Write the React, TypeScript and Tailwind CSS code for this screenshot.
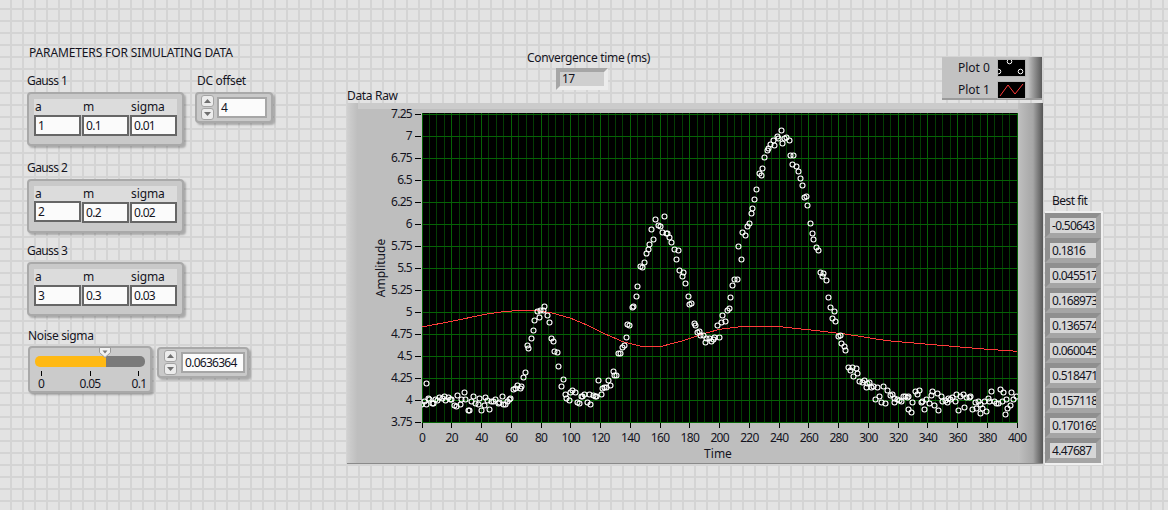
import { useMemo } from 'react'

const font = 'font-["Noto_Sans","Liberation_Sans",sans-serif]'
const num = 'text-[12px] tracking-[-0.72px]'
const label = 'text-[12px] tracking-[-0.33px]'

const xOf = (t: number) => 422 + t * 1.488
const yOf = (v: number) => 422 - (v - 3.75) * 88

// same little generator every run, so the scatter does not move
function seeded(seed: number) {
  let s = seed
  return () => {
    s |= 0
    s = (s + 0x6d2b79f5) | 0
    let r = Math.imul(s ^ (s >>> 15), 1 | s)
    r = (r + Math.imul(r ^ (r >>> 7), 61 | r)) ^ r
    return ((r ^ (r >>> 14)) >>> 0) / 4294967296
  }
}

const gauss = (t: number, a: number, m: number, s: number) => a * Math.exp(-((t - m) ** 2) / (2 * s * s))

const fitLine: [number, number][] = [
  [422, 327], [453, 321], [487, 314], [505, 311.5], [517, 310.7], [537, 310.7], [552, 313], [570, 318], [587, 325],
  [603, 333], [623, 341.7], [640, 346], [660, 346.7], [683, 340.7], [707, 332.7], [720, 329.3], [740, 326.7],
  [760, 326.4], [780, 326.7], [820, 331], [847, 334.3], [887, 340.7], [937, 345], [987, 349.3], [1017, 351.3],
]

const yLabels = ['7.25', '7', '6.75', '6.5', '6.25', '6', '5.75', '5.5', '5.25', '5', '4.75', '4.5', '4.25', '4', '3.75']
const bestFit = ['-0.50643', '0.1816', '0.045517', '0.168973', '0.136574', '0.060045', '0.518471', '0.157118', '0.170169', '4.47687']

function Chart() {
  const points = useMemo(() => {
    const rnd = seeded(17)
    const out: [number, number][] = []
    for (let t = 0; t <= 400; t += 1.33) {
      const noise = (rnd() + rnd() + rnd() + rnd() - 2) * 0.11
      const jitter = (rnd() - 0.5) * 0.9
      const v = 4 + gauss(t, 1, 80, 8) + gauss(t, 2, 160, 16) + gauss(t, 3, 240, 24) + noise
      out.push([Math.round(xOf(t + jitter)) + 0.5, Math.round(yOf(v)) + 0.5])
    }
    out.push([426.5, 383.5], [980.5, 413.5], [1005.5, 414.5], [908.5, 409.5])
    return out
  }, [])

  const minors: number[] = []
  for (let t = 0; t <= 400; t += 5) minors.push(t)

  return (
    <svg viewBox="358 103 660 360" width={660} height={360} className="relative z-10 block overflow-visible">
      <defs>
        <clipPath id="plotArea">
          <rect x={422} y={113} width={596} height={309} />
        </clipPath>
      </defs>
      <rect x={358} y={103} width={660} height={6} fill="#cbcbcb" />
      <rect x={422} y={113} width={596} height={309} fill="#000" />
      <g shapeRendering="crispEdges">
        {minors.map((t) => (
          <line key={t} x1={xOf(t)} x2={xOf(t)} y1={113} y2={422} stroke={t % 20 === 0 ? '#066306' : '#043c04'} strokeWidth={1} />
        ))}
        {yLabels.map((l, i) => (
          <line key={l} x1={422} x2={1018} y1={114 + i * 22} y2={114 + i * 22} stroke="#066306" strokeWidth={1} />
        ))}
        {yLabels.map((l, i) => (
          <line key={l} x1={415} x2={421} y1={114 + i * 22} y2={114 + i * 22} stroke="#000" />
        ))}
        {Array.from({ length: 21 }, (_, i) => (
          <line key={i} x1={xOf(i * 20)} x2={xOf(i * 20)} y1={423} y2={428} stroke="#000" />
        ))}
      </g>
      <g clipPath="url(#plotArea)">
        <polyline points={fitLine.map((p) => p.join(',')).join(' ')} fill="none" stroke="#ff3b3b" strokeWidth={1} shapeRendering="crispEdges" />
        {points.map(([x, y], i) => (
          <circle key={i} cx={x} cy={y} r={2.5} fill="none" stroke="#fff" strokeWidth={1.1} />
        ))}
      </g>
      <g fill="#14141e">
        {yLabels.map((l, i) => (
          <text key={l} x={412} y={118 + i * 22} textAnchor="end" className={num}>{l}</text>
        ))}
        {Array.from({ length: 21 }, (_, i) => (
          <text key={i} x={xOf(i * 20)} y={442} textAnchor="middle" className={num}>{i * 20}</text>
        ))}
        <text x={718} y={458} textAnchor="middle" className="text-[12px]">Time</text>
        <text x={385} y={268} textAnchor="middle" transform="rotate(-90 385 268)" className="text-[12px]">Amplitude</text>
      </g>
    </svg>
  )
}

function Spinner() {
  const btn = 'flex h-[12px] w-[13px] items-center justify-center rounded-[3px] border border-[#a4a4a4] bg-[#ececec]'
  return (
    <div className="flex flex-col gap-[1px]">
      <div className={btn}>
        <svg width="7" height="4" viewBox="0 0 7 4"><path d="M3.5 0 7 4H0z" fill="#6f6f6f" /></svg>
      </div>
      <div className={btn}>
        <svg width="7" height="4" viewBox="0 0 7 4"><path d="M0 0h7L3.5 4z" fill="#6f6f6f" /></svg>
      </div>
    </div>
  )
}

function Cluster({ title, a, m, sigma, high }: { title: string; a: string; m: string; sigma: string; high?: boolean }) {
  const cell = `flex h-[21px] w-[47px] items-center border-2 border-[#666] bg-[#fbfbfb] pl-[2px] ${num}`
  return (
    <div>
      <div className="h-[17px] text-[12px] leading-[17px] tracking-[-0.6px]">{title}</div>
      <div className="mt-[3px] h-[54px] w-[157px] rounded-[4px] border-2 border-[#a9a9a9] bg-[#c9c9c9] px-[5px] pt-[5px] shadow-[2px_2px_2px_rgba(0,0,0,0.25)]">
        <div className="grid h-[16px] w-[143px] grid-cols-[48px_48px_47px] bg-[#dcdcdc] pl-[1px] text-[12px] leading-[16px] tracking-[-0.1px]">
          <span>a</span>
          <span>m</span>
          <span>sigma</span>
        </div>
        <div className="flex w-[143px] items-start gap-[1px]">
          <div className={`${cell} ${high ? '-mt-[1px]' : ''}`}>{a}</div>
          <div className={cell}>{m}</div>
          <div className={cell}>{sigma}</div>
        </div>
      </div>
    </div>
  )
}

function Params() {
  const tick = <i className="h-[5px] w-[1px] bg-black" />
  const scale = 'flex w-[12px] justify-center whitespace-nowrap'
  return (
    <div className="w-[347px] pl-[27px]">
      <div className="mt-[44px] pl-[2px] text-[12px] leading-[17px] tracking-[-0.13px]">PARAMETERS FOR SIMULATING DATA</div>
      <div className="mt-[11px] flex items-start gap-[11px]">
        <Cluster title="Gauss 1" a="1" m="0.1" sigma="0.01" />
        <div>
          <div className={`h-[17px] pl-[2px] leading-[17px] ${label}`}>DC offset</div>
          <div className="mt-[3px] flex h-[31px] w-[78px] items-center gap-[3px] rounded-[4px] border-2 border-[#a9a9a9] bg-[#c9c9c9] pl-[4px] shadow-[2px_2px_2px_rgba(0,0,0,0.25)]">
            <Spinner />
            <div className={`flex h-[21px] w-[50px] items-center border-2 border-[#a6a6a6] bg-[#fbfbfb] pl-[2px] ${num}`}>4</div>
          </div>
        </div>
      </div>
      <div className="mt-[13px] flex flex-col gap-[9px]">
        <Cluster title="Gauss 2" a="2" m="0.2" sigma="0.02" high />
        <Cluster title="Gauss 3" a="3" m="0.3" sigma="0.03" />
      </div>
      <div className="mt-[11px] pl-[1px]">
        <div className={`h-[17px] leading-[17px] ${label}`}>Noise sigma</div>
        <div className="mt-[2px] flex items-start gap-[5px]">
          <div className="relative h-[47px] w-[124px] rounded-[4px] border-2 border-[#a9a9a9] bg-[#cbcbcb] px-[5px] pt-[8px] shadow-[2px_2px_2px_rgba(0,0,0,0.25)]">
            <div className="flex h-[11px] w-[110px] overflow-hidden rounded-[5px]">
              <div className="w-[71px] bg-[#ffb914]" />
              <div className="flex-1 bg-[#7a7a7a]" />
            </div>
            <svg width="12" height="11" viewBox="0 0 12 11" className="absolute left-[69px] top-[-1px]">
              <path d="M.5.5h11v5L6 10.5.5 5.5z" fill="#f2f2f2" stroke="#9a9a9a" />
              <path d="M3.5 3.5h5L6 6.5z" fill="#777" />
            </svg>
            <div className="mt-[4px] flex justify-between px-[6px]">
              {tick}
              {tick}
              {tick}
            </div>
            <div className={`flex w-[110px] justify-between leading-[15px] ${num}`}>
              <span className={scale}>0</span>
              <span className={scale}>0.05</span>
              <span className={scale}>0.1</span>
            </div>
          </div>
          <div className="mt-[1px] flex h-[31px] w-[92px] items-center gap-[4px] rounded-[4px] border-2 border-[#a9a9a9] bg-[#c9c9c9] pl-[5px] shadow-[2px_2px_2px_rgba(0,0,0,0.25)]">
            <Spinner />
            <div className={`flex h-[21px] w-[64px] items-center border-2 border-[#a6a6a6] bg-[#fbfbfb] pl-[2px] ${num}`}>0.0636364</div>
          </div>
        </div>
      </div>
    </div>
  )
}

function GraphColumn() {
  return (
    <div className="w-[696px]">
      <div className="flex h-[103px]">
        <div className={`w-[180px] self-end leading-[15px] ${label}`}>Data Raw</div>
        <div className="flex w-[123px] flex-col pt-[49px]">
          <div className={`text-center leading-[17px] whitespace-nowrap ${label}`}>Convergence time (ms)</div>
          <div className={`ml-[29px] mt-[2px] h-[22px] w-[52px] border-[4px] border-t-[#a6a6a6] border-l-[#a6a6a6] border-r-[#ececec] border-b-[#ececec] bg-[#cfcfcf] pl-[2px] leading-[14px] ${num}`}>17</div>
        </div>
        <div className="ml-auto mr-[1px] mt-[57px] flex h-[43px] w-[100px] border-b-2 border-[#9b9b9b] bg-[#c2c2c2]">
          <div className="flex flex-1 flex-col gap-[4px] pl-[16px] pt-[2px] text-[12px] leading-[18px]">
            <div className="flex items-center justify-between pr-[2px]">
              <span>Plot 0</span>
              <svg width="29" height="18" viewBox="0 0 29 18" className="bg-black outline outline-1 -outline-offset-1 outline-[#b5b5b5]">
                <g fill="none" stroke="#fff">
                  <circle cx="12.5" cy="2.5" r="2.3" />
                  <circle cx="1.5" cy="12.5" r="2.3" />
                  <circle cx="23.5" cy="12.5" r="2.3" />
                </g>
              </svg>
            </div>
            <div className="flex items-center justify-between pr-[2px]">
              <span>Plot 1</span>
              <svg width="29" height="18" viewBox="0 0 29 18" className="bg-black outline outline-1 -outline-offset-1 outline-[#b5b5b5]">
                <polyline points="3,15 11,4 18,13 26,3" fill="none" stroke="#ff3b3b" />
              </svg>
            </div>
          </div>
          <div className="w-[14px] bg-linear-to-r from-[#c2c2c2] via-[#8c8c8c] to-[#5a5a5a]" />
        </div>
      </div>
      <div className="flex h-[361px] border-b border-[#8a8a8a] bg-[#bebebe]">
        <div className="w-[11px] bg-linear-to-r from-[#d0d0d0] to-[#bdbdbd]" />
        <Chart />
        <div className="flex-1 bg-linear-to-r from-[#c0c0c0] via-[#a6a6a6] via-60% to-[#555]" />
      </div>
    </div>
  )
}

function BestFit() {
  return (
    <div className="pl-[2px] pt-[193px]">
      <div className="h-[17px] pl-[7px] text-[12px] leading-[15px] tracking-[-0.5px]">Best fit</div>
      <div className="mt-[1px] flex w-[58px] flex-col border-t-2 border-r-2 border-b-2 border-[#f0f0f0]">
        {bestFit.map((v) => (
          <div key={v} className={`h-[25px] overflow-hidden border-[5px] border-t-[#8f8f8f] border-l-[#8f8f8f] border-r-[#a5a5a5] border-b-[#a5a5a5] bg-[#d6d6d6] pl-[2px] leading-[15px] whitespace-nowrap ${num}`}>
            {v}
          </div>
        ))}
      </div>
    </div>
  )
}

export default function App() {
  return (
    <div className={`${font} flex h-[510px] w-[1168px] overflow-hidden bg-[#e3e3e3] bg-[linear-gradient(to_right,#d4d4d4_2px,transparent_2px),linear-gradient(to_bottom,#d4d4d4_2px,transparent_2px)] bg-size-[12px_12px] bg-position-[10px_8px] text-[#14141e]`}>
      <Params />
      <GraphColumn />
      <BestFit />
    </div>
  )
}
